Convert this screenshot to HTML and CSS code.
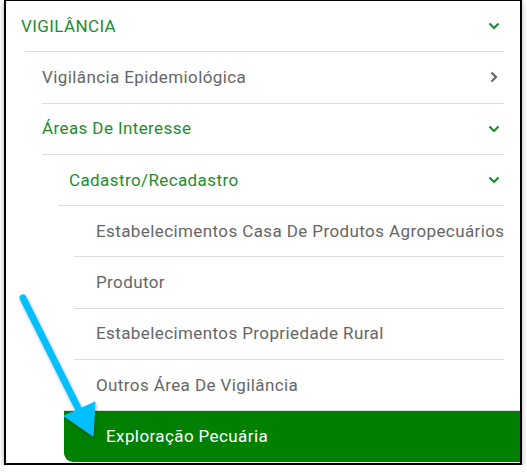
FILE: index.html
```html
<!DOCTYPE html>
<html lang="pt-BR">
<head>
    <meta charset="UTF-8">
    <meta name="viewport" content="width=device-width, initial-scale=1.0">
    <title>Menu Vigilância</title>
    <link rel="stylesheet" href="styles.css">
</head>
<body>
    <div class="frame">
        <nav class="menu">
            <!-- Nivel 1 -->
            <div class="item level-0 open">
                <span class="label">VIGILÂNCIA</span>
                <svg class="chevron" viewBox="0 0 12 8"><path d="M1.5 1.5 6 6l4.5-4.5"/></svg>
            </div>

            <!-- Nivel 2 -->
            <div class="item level-1 first">
                <span class="label">Vigilância Epidemiológica</span>
                <svg class="chevron right" viewBox="0 0 8 12"><path d="M1.5 1.5 6 6l-4.5 4.5"/></svg>
            </div>
            <div class="item level-1 open">
                <span class="label">Áreas De Interesse</span>
                <svg class="chevron" viewBox="0 0 12 8"><path d="M1.5 1.5 6 6l4.5-4.5"/></svg>
            </div>

            <!-- Nivel 3 -->
            <div class="item level-2 open">
                <span class="label">Cadastro/Recadastro</span>
                <svg class="chevron" viewBox="0 0 12 8"><path d="M1.5 1.5 6 6l4.5-4.5"/></svg>
            </div>

            <!-- Nivel 4 -->
            <div class="item level-3 first">
                <span class="label">Estabelecimentos Casa De Produtos Agropecuários</span>
            </div>
            <div class="item level-3">
                <span class="label">Produtor</span>
            </div>
            <div class="item level-3">
                <span class="label">Estabelecimentos Propriedade Rural</span>
            </div>
            <div class="item level-3">
                <span class="label">Outros Área De Vigilância</span>
            </div>
            <div class="item level-3 active">
                <span class="label">Exploração Pecuária</span>
            </div>
        </nav>

        <!-- Seta de destaque -->
        <svg class="pointer" viewBox="0 0 120 160">
            <defs>
                <filter id="shadow" x="-20%" y="-20%" width="140%" height="140%">
                    <feDropShadow dx="1" dy="2" stdDeviation="1.5" flood-color="#000" flood-opacity="0.35"/>
                </filter>
            </defs>
            <g filter="url(#shadow)" fill="#00bfff" stroke="#00bfff">
                <line x1="18" y1="16" x2="73" y2="126" stroke-width="7" stroke-linecap="round"/>
                <polygon points="59,134 90,120 88,154" stroke-width="1" stroke-linejoin="round"/>
            </g>
        </svg>
    </div>
</body>
</html>
```

FILE: styles.css
```css
* {
    margin: 0;
    padding: 0;
    box-sizing: border-box;
}

body {
    background: #fff;
    font-family: Roboto, 'Liberation Sans', Arial, sans-serif;
    overflow: hidden;
}

.frame {
    position: relative;
    margin: -1px 0 0 4px;
    width: 518px;
    height: 466px;
    border: 2px solid #000;
    background: #fff;
    box-shadow: 0 3px 6px rgba(0, 0, 0, 0.3);
    overflow: hidden;
}

.menu {
    display: flex;
    flex-direction: column;
}

.item {
    display: flex;
    align-items: center;
    justify-content: space-between;
    height: 51.3px;
    margin-right: 16px;
    border-top: 1px solid #dcdcdc;
    font-size: 17px;
    letter-spacing: 0.4px;
    color: #666;
    white-space: nowrap;
}

.label {
    line-height: 1;
}

.item.open {
    color: #1e8c2e;
}

.level-0 {
    height: 50.3px;
    border-top: none;
    padding-left: 15px;
}

.level-1 {
    margin-left: 36px;
}

.level-1.first {
    margin-left: 19px;
    padding-left: 17px;
}

.level-2 {
    margin-left: 36px;
    padding-left: 27px;
}

.level-3 {
    margin-left: 68px;
    padding-left: 22px;
}

.level-3.first {
    margin-left: 52px;
    padding-left: 38px;
}

.item.active {
    margin-left: 58px;
    margin-right: -4px;
    padding-left: 42px;
    border-top: 1px solid #dcdcdc;
    background: #008000;
    color: #fff;
    border-bottom-left-radius: 9px;
}

.chevron {
    width: 12px;
    height: 12px;
    margin-right: 4px;
    fill: none;
    stroke: #1e8c2e;
    stroke-width: 2.2;
}

.chevron.right {
    width: 8px;
    margin-right: 6px;
    stroke: #666;
}

.pointer {
    position: absolute;
    left: -1px;
    top: 281px;
    width: 120px;
    height: 160px;
}
```
